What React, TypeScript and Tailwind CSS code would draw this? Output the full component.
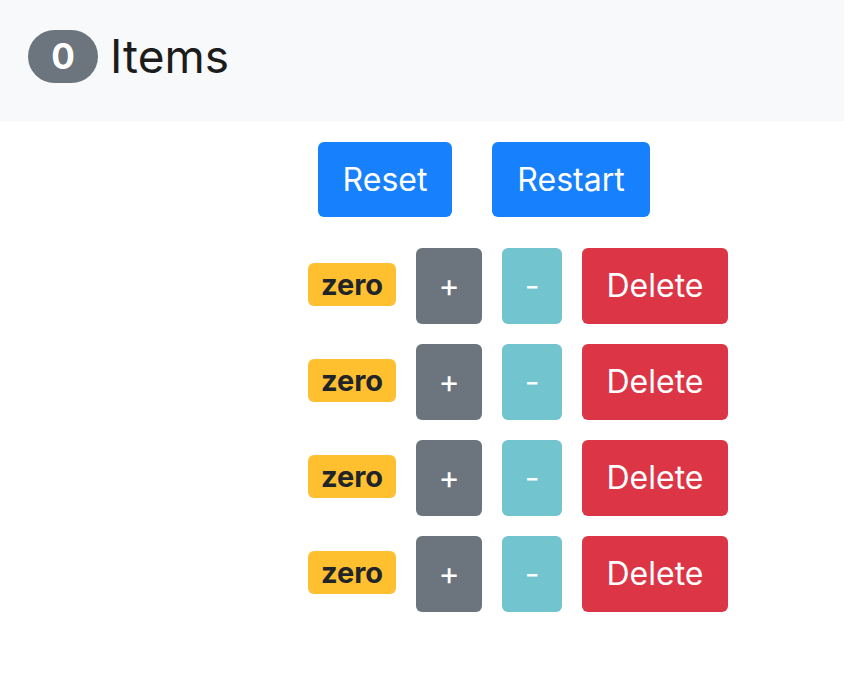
import { useState } from "react"

const font = { fontFamily: "Inter, 'Noto Sans', sans-serif" }

const names = ["zero", "zero", "zero", "zero"]

export default function App() {
  const [counters] = useState(names.map((n, i) => ({ id: i, label: n })))

  return (
    <div className="min-h-[676px] bg-white text-[#212529]" style={font}>
      {/* Navbar */}
      <div className="flex h-[121px] items-center bg-[#f8f9fa] pb-[9px] pl-[28px]">
        <span className="flex h-[53px] w-[70px] items-center justify-center rounded-full bg-[#6c757d] text-[35px] font-bold leading-none text-white">
          0
        </span>
        <span className="ml-[12px] text-[46px] leading-none text-[#1c1c1c]">Items</span>
      </div>

      <div className="pl-[308px]">
        {/* Reset / Restart */}
        <div className="mt-[21px] flex gap-[40px] pl-[10px]">
          <button className="h-[75px] w-[134px] rounded-[6px] bg-[#1780fc] text-[32px] text-white">Reset</button>
          <button className="h-[75px] w-[158px] rounded-[6px] bg-[#1780fc] text-[32px] text-white">Restart</button>
        </div>

        {/* Counters */}
        <div className="mt-[31px] flex flex-col gap-[20px]">
          {counters.map((c) => (
            <div key={c.id} className="flex items-center gap-[20px]">
              <span className="mb-[4px] flex h-[43px] w-[88px] items-center justify-center rounded-[6px] bg-[#ffc030] text-[29px] font-bold leading-none text-[#212529]">
                {c.label}
              </span>
              <button className="h-[76px] w-[66px] rounded-[6px] bg-[#6c757d] text-[32px] text-white">+</button>
              <button className="h-[76px] w-[60px] rounded-[6px] bg-[#72c4cf] text-[32px] text-white">-</button>
              <button className="h-[76px] w-[146px] rounded-[6px] bg-[#dc3545] text-[32px] text-white">Delete</button>
            </div>
          ))}
        </div>
      </div>
    </div>
  )
}
